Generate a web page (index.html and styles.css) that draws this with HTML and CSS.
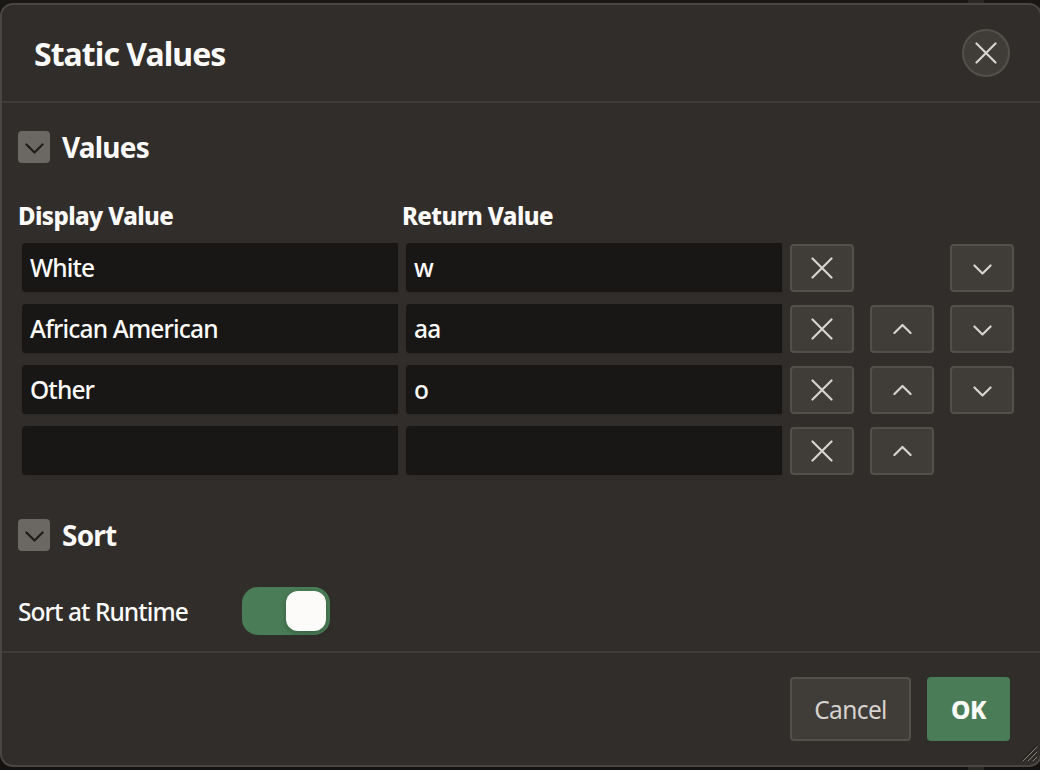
FILE: index.html
```html
<!DOCTYPE html>
<html lang="en">
<head>
<meta charset="utf-8">
<title>Static Values</title>
<link rel="stylesheet" href="styles.css">
</head>
<body>
<svg class="defs" width="0" height="0" aria-hidden="true">
  <symbol id="x" viewBox="0 0 22 22"><path d="M1.500 1.500 20.500 20.500M20.500 1.500 1.500 20.500"/></symbol>
  <symbol id="down" viewBox="0 0 20 12"><path d="M1.500 1.500 10 10 18.500 1.500"/></symbol>
  <symbol id="up" viewBox="0 0 20 12"><path d="M1.500 10.500 10 2 18.500 10.500"/></symbol>
</svg>
<section class="dialog" role="dialog" aria-label="Static Values">
  <header class="dialog-header">
    <h1 class="dialog-title">Static Values</h1>
    <button class="close" aria-label="Close"><svg class="icon-x"><use href="#x"/></svg></button>
  </header>

  <main class="dialog-body">
    <div class="group-header">
      <button class="collapse" aria-label="Collapse"><svg class="icon-chevron"><use href="#down"/></svg></button>
      <h2 class="group-title">Values</h2>
    </div>
    <div class="columns">
      <span>Display Value</span><span>Return Value</span>
    </div>
    <div class="rows">
      <div class="row">
        <div class="field">White</div><div class="field">w</div>
        <button class="btn tool" aria-label="Remove"><svg class="icon-x"><use href="#x"/></svg></button>
        <span class="tool-gap"></span>
        <button class="btn tool" aria-label="Move down"><svg class="icon-chevron low"><use href="#down"/></svg></button>
      </div>
      <div class="row">
        <div class="field">African American</div><div class="field">aa</div>
        <button class="btn tool" aria-label="Remove"><svg class="icon-x"><use href="#x"/></svg></button>
        <button class="btn tool" aria-label="Move up"><svg class="icon-chevron"><use href="#up"/></svg></button>
        <button class="btn tool" aria-label="Move down"><svg class="icon-chevron low"><use href="#down"/></svg></button>
      </div>
      <div class="row">
        <div class="field">Other</div><div class="field">o</div>
        <button class="btn tool" aria-label="Remove"><svg class="icon-x"><use href="#x"/></svg></button>
        <button class="btn tool" aria-label="Move up"><svg class="icon-chevron"><use href="#up"/></svg></button>
        <button class="btn tool" aria-label="Move down"><svg class="icon-chevron low"><use href="#down"/></svg></button>
      </div>
      <div class="row">
        <div class="field"></div><div class="field"></div>
        <button class="btn tool" aria-label="Remove"><svg class="icon-x"><use href="#x"/></svg></button>
        <button class="btn tool" aria-label="Move up"><svg class="icon-chevron"><use href="#up"/></svg></button>
      </div>
    </div>

    <div class="group-header">
      <button class="collapse" aria-label="Collapse"><svg class="icon-chevron"><use href="#down"/></svg></button>
      <h2 class="group-title">Sort</h2>
    </div>
    <div class="switch-row">
      <span class="switch-label">Sort at Runtime</span>
      <span class="switch" role="switch" aria-checked="true"><span class="knob"></span></span>
    </div>
  </main>

  <footer class="dialog-footer">
    <button class="btn cancel">Cancel</button>
    <button class="btn ok">OK</button>
  </footer>
  <svg class="grip" viewBox="0 0 16 16"><path class="shade" d="M0 14 14 0M5 14 14 5M10 14 14 10"/><path d="M1 15 15 1M6 15 15 6M11 15 15 11"/></svg>
</section>
</body>
</html>
```
FILE: styles.css
```css
* { box-sizing: border-box; }

body {
  margin: 0;
  width: 1040px;
  height: 770px;
  padding-top: 3px;
  overflow: hidden;
  background:
    linear-gradient(#2a2825, #2a2825) 968px 0 / 16px 770px no-repeat,
    linear-gradient(#1a1815 50%, #131211 50%);
  font-family: "Noto Sans", "Open Sans", sans-serif;
  color: #fcfbfa;
}

.defs { position: absolute; }

h1, h2 { margin: 0; }

button {
  font: inherit;
  padding: 0;
  display: flex;
  align-items: center;
  justify-content: center;
}

svg {
  fill: none;
  stroke: #d6d3d0;
  stroke-width: 2;
  stroke-linecap: round;
  stroke-linejoin: round;
}

.icon-x { width: 22px; height: 22px; stroke-width: 2.2; margin-top: 0.6px; }
.icon-chevron { width: 19px; height: 11.4px; margin-left: 1px; stroke-width: 2.3; }
.icon-chevron.low { margin-top: 3px; }
.row .icon-chevron:not(.low) { margin-bottom: 1px; }

.dialog {
  position: relative;
  display: flex;
  flex-direction: column;
  width: 1042px;
  height: 764px;
  border: 2px solid #4a4643;
  border-radius: 13px;
  background: #312d2a;
}

.dialog-header {
  display: flex;
  align-items: center;
  justify-content: space-between;
  height: 98px;
  padding: 0 30px 0 32px;
  border-bottom: 2px solid #3f3b38;
}

.dialog-title {
  padding-top: 2px;
  font-size: 32px;
  font-weight: 700;
  line-height: 44px;
  letter-spacing: -0.95px;
}

.close {
  width: 48px;
  height: 48px;
  border: 2px solid #53504b;
  border-radius: 50%;
  background: #403c38;
}

.dialog-body { flex: 1; padding: 28px 0 0 16px; }

.group-header { display: flex; align-items: center; gap: 12px; height: 32px; }

.collapse {
  width: 32px;
  height: 32px;
  border: 0;
  border-radius: 4px;
  background: #6b6762;
}
.collapse .icon-chevron { stroke: #1f1d1b; margin: 3px 0 0 1px; }

.group-title {
  font-size: 28px;
  font-weight: 700;
  line-height: 32px;
  letter-spacing: -0.8px;
}

.columns {
  display: grid;
  grid-template-columns: 384px 384px;
  margin-top: 36px;
  font-size: 24px;
  font-weight: 800;
  line-height: 34px;
  letter-spacing: -0.6px;
}

.rows {
  display: flex;
  flex-direction: column;
  gap: 12px;
  margin: 10px 0 44px 4px;
}

.row { display: flex; align-items: flex-end; height: 49px; }

.field {
  width: 376px;
  height: 49px;
  margin-right: 8px;
  padding-left: 8px;
  border-radius: 4px 0 0 4px;
  background: #191715;
  box-shadow: 0 1px 2px rgba(0, 0, 0, .12);
  font-size: 24.5px;
  font-weight: 500;
  line-height: 50px;
  letter-spacing: -0.85px;
}

.btn {
  border: 2px solid #53504b;
  border-radius: 4px;
  background: #403c38;
}

.tool, .tool-gap { width: 64px; height: 48px; margin-right: 16px; }

.switch-row { display: flex; align-items: center; height: 48px; margin-top: 36px; }
.switch-label {
  width: 224px;
  padding-top: 1px;
  font-size: 24.5px;
  font-weight: 500;
  letter-spacing: -0.93px;
}

.switch {
  display: flex;
  justify-content: flex-end;
  width: 88px;
  height: 48px;
  padding: 4px;
  border-radius: 16px;
  background: #4a7d57;
}

.knob {
  width: 40px;
  height: 40px;
  border-radius: 12px;
  background: #fcfbfa;
  box-shadow: 0 2px 6px rgba(0, 0, 0, .25);
}

.dialog-footer {
  display: flex;
  justify-content: flex-end;
  gap: 16px;
  height: 114px;
  padding: 24px 30px 0 0;
  border-top: 2px solid #3f3b38;
}
.dialog-footer .btn {
  height: 64px;
  padding-top: 1px;
  font-size: 24.5px;
  font-weight: 450;
  letter-spacing: -0.6px;
}
.dialog-footer .cancel { width: 121px; color: #d6d3d0; }
.dialog-footer .ok {
  width: 83px;
  border: 0;
  background: #4a7d57;
  color: #fcfbfa;
  font-weight: 800;
}

.grip {
  position: absolute;
  right: 2px;
  bottom: 3px;
  width: 16px;
  height: 16px;
  stroke: #85817c;
  stroke-width: 1;
}
.grip .shade { stroke: #211e1c; }
```
